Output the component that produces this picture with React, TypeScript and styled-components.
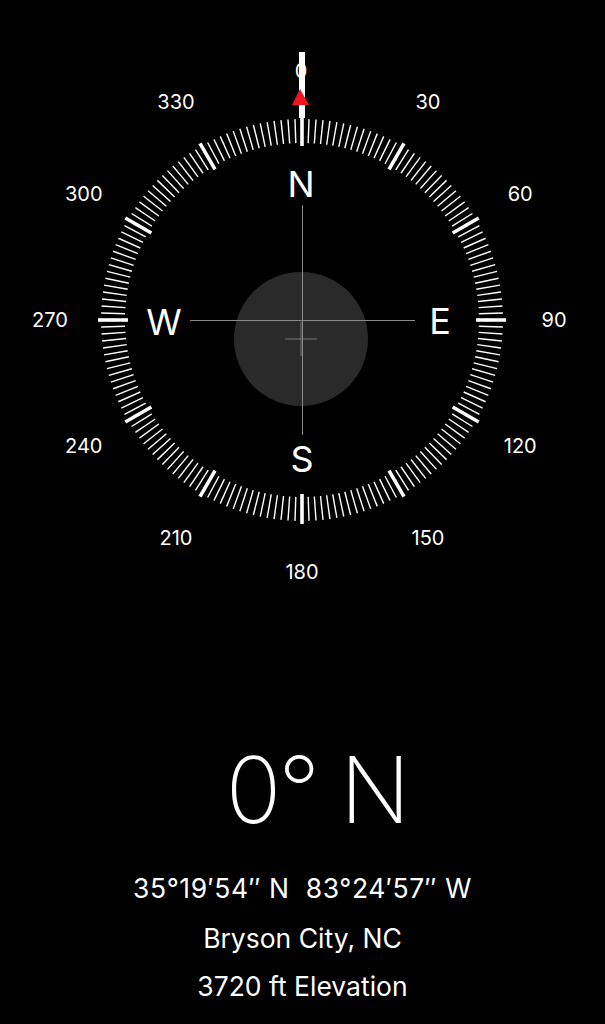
import React from 'react';
import styled, { createGlobalStyle } from 'styled-components';

const GlobalStyle = createGlobalStyle`
  html, body {
    margin: 0;
    padding: 0;
    background: #000000;
  }
  body {
    font-family: Inter, 'Noto Sans', 'Liberation Sans', sans-serif;
    color: #ffffff;
  }
`;

const Screen = styled.div`
  width: 605px;
  height: 1024px;
  background: #000000;
  display: flex;
  flex-direction: column;
  align-items: center;
  overflow: hidden;
`;

const Dial = styled.svg`
  display: block;
  width: 605px;
  height: 620px;
  flex-shrink: 0;
`;

const Readout = styled.div`
  display: flex;
  flex-direction: column;
  align-items: center;
  margin-top: 120px;
`;

const Heading = styled.div`
  font-size: 92px;
  font-weight: 200;
  line-height: 100px;
  letter-spacing: -3px;
  margin-left: 28px;
`;

const Detail = styled.div<{ $gap?: number; $spacing?: number }>`
  font-size: 26.5px;
  font-weight: 400;
  line-height: 30px;
  letter-spacing: ${(p) => p.$spacing ?? 0}px;
  margin-top: ${(p) => p.$gap ?? 20}px;
  white-space: pre;
`;

const CX = 302;
const CY = 320;

const degreeLabels = [30, 60, 90, 120, 150, 180, 210, 240, 270, 300, 330];
const cardinals = [
  { text: 'N', x: 301, y: 184 },
  { text: 'E', x: 440, y: 321 },
  { text: 'S', x: 302, y: 459 },
  { text: 'W', x: 164, y: 322 },
];

const polar = (deg: number, r: number) => {
  const a = ((deg - 90) * Math.PI) / 180;
  return { x: CX + r * Math.cos(a), y: CY + r * Math.sin(a) };
};

const Ticks = () => {
  const ticks = [];
  for (let i = 0; i < 180; i++) {
    const deg = i * 2;
    const major = deg % 30 === 0;
    const a = polar(deg, major ? 174 : 177);
    const b = polar(deg, major ? 204 : 201);
    ticks.push(
      <line
        key={deg}
        x1={a.x}
        y1={a.y}
        x2={b.x}
        y2={b.y}
        stroke="#ffffff"
        strokeWidth={major ? 3.6 : 1.4}
      />,
    );
  }
  return <g>{ticks}</g>;
};

const App = () => {
  return (
    <Screen>
      <GlobalStyle />
      <Dial viewBox="0 0 605 620">
        <Ticks />
        {degreeLabels.map((d) => {
          const p = polar(d, 252);
          return (
            <text
              key={d}
              x={p.x}
              y={p.y}
              fill="#ffffff"
              fontSize="20"
              fontFamily="Inter, 'Noto Sans', sans-serif"
              textAnchor="middle"
              dominantBaseline="central"
            >
              {d}
            </text>
          );
        })}
        <text
          x={301}
          y={71}
          fill="#ffffff"
          fontSize="20"
          fontFamily="Inter, 'Noto Sans', sans-serif"
          textAnchor="middle"
          dominantBaseline="central"
        >
          0
        </text>
        {cardinals.map((c) => (
          <text
            key={c.text}
            x={c.x}
            y={c.y}
            fill="#ffffff"
            fontSize="36"
            fontFamily="Inter, 'Noto Sans', sans-serif"
            textAnchor="middle"
            dominantBaseline="central"
          >
            {c.text}
          </text>
        ))}

        {/* level bubble */}
        <circle cx={301} cy={339} r={67} fill="#2a2a2a" />
        <line x1={190} y1={320.5} x2={415} y2={320.5} stroke="#8a8a8a" strokeWidth={1} />
        <line x1={302.5} y1={205} x2={302.5} y2={435} stroke="#8a8a8a" strokeWidth={1} />
        <line x1={285} y1={339} x2={317} y2={339} stroke="#777777" strokeWidth={1} />
        <line x1={301} y1={322} x2={301} y2={356} stroke="#777777" strokeWidth={1} />

        {/* heading needle */}
        <rect x={299} y={52} width={6} height={66} fill="#ffffff" />
        <polygon points="300,89 292,105 309,105" fill="#f2141e" />
      </Dial>
      <Readout>
        <Heading>0° N</Heading>
        <Detail $gap={33} $spacing={0.6}>35°19′54″ N  83°24′57″ W</Detail>
        <Detail $gap={20}>Bryson City, NC</Detail>
        <Detail $gap={18}>3720 ft Elevation</Detail>
      </Readout>
    </Screen>
  );
};

export default App;
